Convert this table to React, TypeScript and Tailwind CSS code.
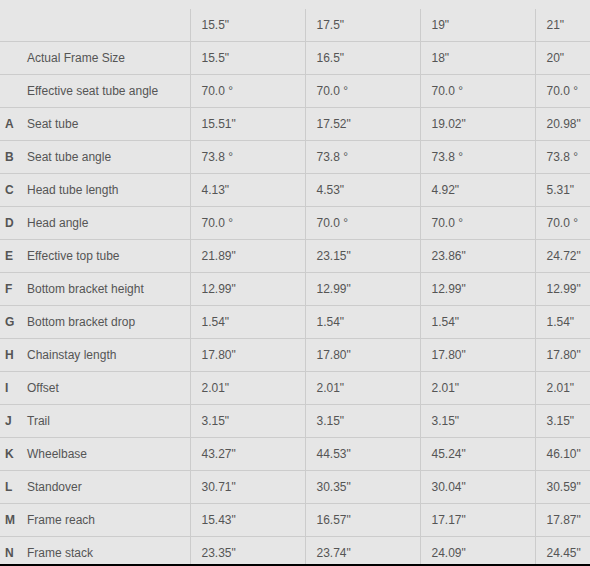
const sizes = ['15.5"', '17.5"', '19"', '21"'];

type Row = { letter?: string; label: string; values: string[] };

const rows: Row[] = [
  { label: "Actual Frame Size", values: ['15.5"', '16.5"', '18"', '20"'] },
  { label: "Effective seat tube angle", values: ["70.0 °", "70.0 °", "70.0 °", "70.0 °"] },
  { letter: "A", label: "Seat tube", values: ['15.51"', '17.52"', '19.02"', '20.98"'] },
  { letter: "B", label: "Seat tube angle", values: ["73.8 °", "73.8 °", "73.8 °", "73.8 °"] },
  { letter: "C", label: "Head tube length", values: ['4.13"', '4.53"', '4.92"', '5.31"'] },
  { letter: "D", label: "Head angle", values: ["70.0 °", "70.0 °", "70.0 °", "70.0 °"] },
  { letter: "E", label: "Effective top tube", values: ['21.89"', '23.15"', '23.86"', '24.72"'] },
  { letter: "F", label: "Bottom bracket height", values: ['12.99"', '12.99"', '12.99"', '12.99"'] },
  { letter: "G", label: "Bottom bracket drop", values: ['1.54"', '1.54"', '1.54"', '1.54"'] },
  { letter: "H", label: "Chainstay length", values: ['17.80"', '17.80"', '17.80"', '17.80"'] },
  { letter: "I", label: "Offset", values: ['2.01"', '2.01"', '2.01"', '2.01"'] },
  { letter: "J", label: "Trail", values: ['3.15"', '3.15"', '3.15"', '3.15"'] },
  { letter: "K", label: "Wheelbase", values: ['43.27"', '44.53"', '45.24"', '46.10"'] },
  { letter: "L", label: "Standover", values: ['30.71"', '30.35"', '30.04"', '30.59"'] },
  { letter: "M", label: "Frame reach", values: ['15.43"', '16.57"', '17.17"', '17.87"'] },
  { letter: "N", label: "Frame stack", values: ['23.35"', '23.74"', '24.09"', '24.45"'] },
];

export default function App() {
  return (
    <div className="w-[590px] h-[566px] overflow-hidden bg-[#e6e6e6] border-b-2 border-black pt-[9px] font-['Liberation_Sans',Arial,sans-serif] text-[12px] text-[#555555]">
      {/* geometry table, wider than the viewport so the last column is cut */}
      <table className="table-fixed border-collapse w-[650px]">
        <colgroup>
          <col className="w-[190px]" />
          <col className="w-[115px]" />
          <col className="w-[115px]" />
          <col className="w-[115px]" />
          <col className="w-[115px]" />
        </colgroup>
        <thead>
          <tr className="h-[32px] border-b border-[#cccccc]">
            <th className="p-0" />
            {sizes.map((s) => (
              <th key={s} className="p-0 pl-[11px] text-left font-normal align-middle border-l border-[#cccccc]">
                {s}
              </th>
            ))}
          </tr>
        </thead>
        <tbody>
          {rows.map((r) => (
            <tr key={r.label} className="h-[33px] border-b border-[#cccccc]">
              <td className="p-0 align-middle">
                <div className="flex items-center">
                  <span className="w-[27px] pl-[5px] font-bold">{r.letter}</span>
                  <span>{r.label}</span>
                </div>
              </td>
              {r.values.map((v, i) => (
                <td key={i} className="p-0 pl-[11px] align-middle border-l border-[#cccccc]">
                  {v}
                </td>
              ))}
            </tr>
          ))}
        </tbody>
      </table>
    </div>
  );
}
